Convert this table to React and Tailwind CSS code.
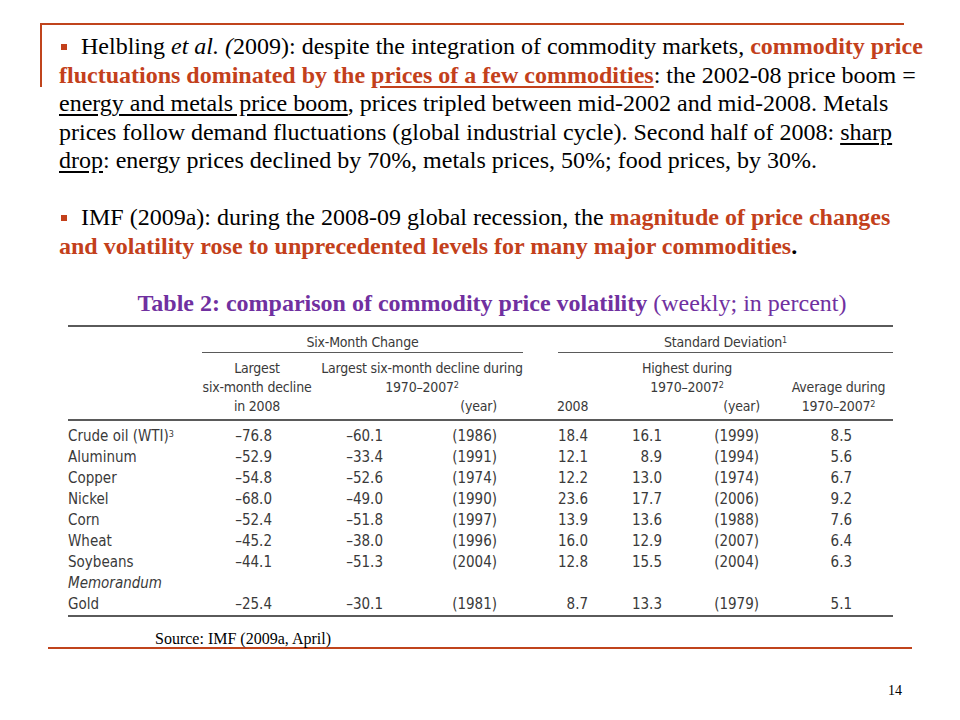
const RED = "text-[#c3401b]";

const rows = [
  ["Crude oil (WTI)", "3", "–76.8", "–60.1", "(1986)", "18.4", "16.1", "(1999)", "8.5"],
  ["Aluminum", "", "–52.9", "–33.4", "(1991)", "12.1", "8.9", "(1994)", "5.6"],
  ["Copper", "", "–54.8", "–52.6", "(1974)", "12.2", "13.0", "(1974)", "6.7"],
  ["Nickel", "", "–68.0", "–49.0", "(1990)", "23.6", "17.7", "(2006)", "9.2"],
  ["Corn", "", "–52.4", "–51.8", "(1997)", "13.9", "13.6", "(1988)", "7.6"],
  ["Wheat", "", "–45.2", "–38.0", "(1996)", "16.0", "12.9", "(2007)", "6.4"],
  ["Soybeans", "", "–44.1", "–51.3", "(2004)", "12.8", "15.5", "(2004)", "6.3"],
];

function Bullet() {
  return <span className="inline-block w-[6px] h-[6px] bg-[#c3401b] ml-[2px] mr-[14px] align-[4px]" />;
}

function Sup({ children }) {
  return <sup className="text-[9px]">{children}</sup>;
}

function DataRow({ r }) {
  return (
    <div className="flex h-[21px] leading-[21px]">
      <div className="w-[132px]">
        {r[0]}
        {r[1] && <Sup>{r[1]}</Sup>}
      </div>
      <div className="w-[72px] text-right">{r[2]}</div>
      <div className="w-[111px] text-right">{r[3]}</div>
      <div className="w-[114px] text-right">{r[4]}</div>
      <div className="w-[91px] text-right">{r[5]}</div>
      <div className="w-[74px] text-right">{r[6]}</div>
      <div className="w-[97px] text-right">{r[7]}</div>
      <div className="w-[93px] text-right">{r[8]}</div>
    </div>
  );
}

function HeadCell({ w, lines }) {
  return (
    <div className={`flex flex-col ${w}`}>
      {lines.map((l, i) => (
        <div key={i} className={`h-[19px] leading-[19px] ${l.cls || "text-center"}`}>
          {l.t}
        </div>
      ))}
    </div>
  );
}

function Table() {
  return (
    <div className="ml-[68px] w-[825px] mt-[7px] border-t-2 border-b-2 border-[#5a5a5a] text-[#3a3a3a] text-[15px] whitespace-nowrap font-['DejaVu_Sans_Condensed','Liberation_Sans',sans-serif]">
      <div className="flex h-[26px] text-[14px] tracking-[-0.2px]">
        <div className="w-[134px]" />
        <div className="w-[321px] border-b border-[#5a5a5a] text-center pt-[6px] leading-[18px]">Six-Month Change</div>
        <div className="w-[35px]" />
        <div className="w-[335px] border-b border-[#5a5a5a] text-center pt-[6px] leading-[18px]">
          Standard Deviation<Sup>1</Sup>
        </div>
      </div>
      <div className="flex pt-[6px] pb-[3px] border-b-2 border-[#5a5a5a] text-[14px] tracking-[-0.2px]">
        <div className="w-[134px]" />
        <HeadCell w="w-[110px]" lines={[{ t: "Largest" }, { t: "six-month decline" }, { t: "in 2008" }]} />
        <HeadCell
          w="w-[220px]"
          lines={[
            { t: "Largest six-month decline during" },
            { t: <>1970–2007<Sup>2</Sup></> },
            { t: "(year)", cls: "text-right pr-[35px]" },
          ]}
        />
        <div className="w-[25px]" />
        <HeadCell w="w-[33px]" lines={[{ t: "" }, { t: "" }, { t: "2008", cls: "text-left" }]} />
        <HeadCell
          w="w-[194px]"
          lines={[
            { t: "Highest during" },
            { t: <>1970–2007<Sup>2</Sup></> },
            { t: "(year)", cls: "text-right pr-[24px]" },
          ]}
        />
        <HeadCell
          w="w-[109px]"
          lines={[{ t: "" }, { t: "Average during" }, { t: <>1970–2007<Sup>2</Sup></> }]}
        />
      </div>
      <div className="pt-[5px]">
        {rows.map((r) => (
          <DataRow key={r[0]} r={r} />
        ))}
        <div className="h-[21px] leading-[21px] italic">Memorandum</div>
        <DataRow r={["Gold", "", "–25.4", "–30.1", "(1981)", "8.7", "13.3", "(1979)", "5.1"]} />
      </div>
    </div>
  );
}

export default function App() {
  return (
    <div className="relative w-[960px] h-[720px] bg-white text-black font-['Liberation_Serif','Times_New_Roman',serif] overflow-hidden">
      {/* frame corner */}
      <div className="absolute left-[40px] top-[23px] w-[864px] h-[64px] border-t-2 border-l-2 border-[#c0441c]" />

      <div className="relative pl-[59px] pt-[32px] text-[24px] leading-[28.5px] whitespace-nowrap">
        <div>
          <Bullet />
          Helbling <i>et al. (</i>2009): despite the integration of commodity markets, <b className={RED}>commodity price</b>
        </div>
        <div>
          <b className={RED}>
            fluctuations dominated by the <u className="underline-offset-[3px]">prices of a few commodities</u>
          </b>
          : the 2002-08 price boom =
        </div>
        <div>
          <u className="underline-offset-[3px]">energy and metals price boom</u>, prices tripled between mid-2002 and mid-2008. Metals
        </div>
        <div>
          prices follow demand fluctuations (global industrial cycle). Second half of 2008: <u className="underline-offset-[3px]">sharp</u>
        </div>
        <div>
          <u className="underline-offset-[3px]">drop</u>: energy prices declined by 70%, metals prices, 50%; food prices, by 30%.
        </div>

        <div className="mt-[28.5px]">
          <Bullet />
          IMF (2009a): during the 2008-09 global recession, the <b className={RED}>magnitude of price changes</b>
        </div>
        <div>
          <b className={RED}>and volatility rose to unprecedented levels for many major commodities</b>
          <b>.</b>
        </div>
      </div>

      <div className="mt-[28px] h-[30px] leading-[30px] pl-[24px] text-center text-[24px] text-[#7030a0] whitespace-nowrap">
        <b>Table 2: comparison of commodity price volatility</b> (weekly; in percent)
      </div>

      <Table />

      <div className="mt-[14px] pl-[155px] h-[16px] leading-[16px] text-[16px]">Source: IMF (2009a, April)</div>
      <div className="ml-[48px] w-[864px] h-[2px] bg-[#c0441c]" />
      <div className="mt-[34px] w-[902px] text-right text-[14px] leading-[16px]">14</div>
    </div>
  );
}
